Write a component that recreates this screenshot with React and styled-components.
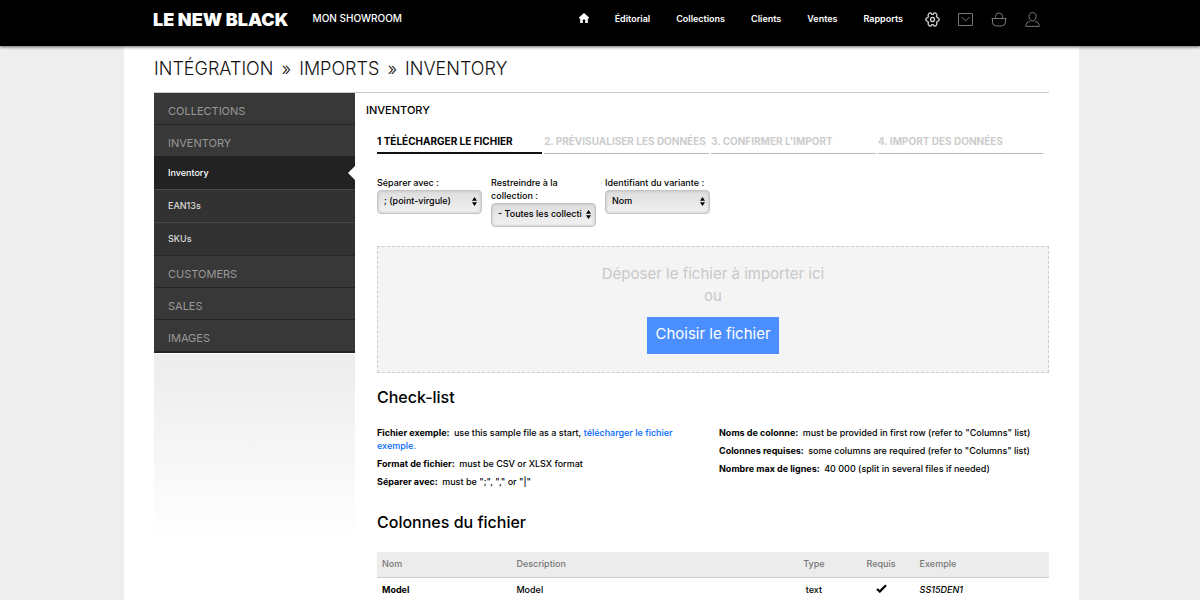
import React from 'react';
import styled, { createGlobalStyle } from 'styled-components';

const GlobalStyle = createGlobalStyle`
  * {
    box-sizing: border-box;
  }
  body {
    margin: 0;
    background-color: #eee;
    color: #000;
    font-family: Inter, 'Liberation Sans', sans-serif;
    font-size: 9px;
    font-weight: 500;
    line-height: 13px;
  }
  a {
    text-decoration: none;
  }
`;

const Header = styled.header`
  position: relative;
  display: flex;
  align-items: flex-start;
  height: 46px;
  padding: 8px 160px 0 153px;
  background-color: #000;
  box-shadow: 0 1px 3px rgba(0, 0, 0, 0.6);
`;

const Logo = styled.a`
  color: #fff;
  font-size: 18px;
  font-weight: 900;
  line-height: 24px;
  white-space: nowrap;
`;

const Showroom = styled.a`
  margin-left: 24px;
  color: #fff;
  font-size: 10px;
  line-height: 20px;
`;

const Nav = styled.nav`
  display: flex;
  align-items: center;
  gap: 26px;
  height: 20px;
  margin-left: auto;
`;

const NavLink = styled.a`
  color: #fff;
  font-weight: 600;
  svg {
    display: block;
  }
`;

const Tools = styled.div`
  display: flex;
  align-items: center;
  gap: 18px;
  height: 22px;
  margin-left: 22px;
`;

const ToolLink = styled.a`
  color: ${({ $active }) => ($active ? '#ccc' : '#777')};
  svg {
    display: block;
    fill: none;
    stroke: currentColor;
  }
`;

const Page = styled.div`
  min-height: calc(100vh - 46px);
  margin: 0 121px 0 124px;
  padding: 0 30px;
  background-color: #fff;
`;

const Title = styled.h1`
  margin: 0;
  padding: 10px 0;
  color: #111;
  font-size: 18px;
  font-weight: 300;
  line-height: 26px;
  text-transform: uppercase;
`;

const Separator = styled.span`
  margin: 0 3px;
`;

const Columns = styled.div`
  display: flex;
  border-top: 1px solid #ccc;
`;

const Sidebar = styled.aside`
  flex: none;
  width: 201px;
`;

const Menu = styled.ul`
  margin: 0;
  padding: 0;
  list-style: none;
  border-bottom: 1px solid #222;
`;

const MenuItem = styled.li`
  background-color: #383838;
  border-bottom: 1px solid #262626;
`;

const MenuLink = styled.a`
  display: block;
  padding: 5px 14px 0;
  color: #999;
  font-size: 11px;
  font-weight: 400;
  line-height: 26px;
  text-transform: uppercase;
`;

const SubMenu = styled.ul`
  margin: 0;
  padding: 0;
  list-style: none;
`;

const SubLink = styled.a`
  position: relative;
  display: block;
  padding: 0 14px;
  border-top: 1px solid ${({ $current }) => ($current ? '#222' : '#484848')};
  background-color: ${({ $current }) => ($current ? '#222' : '#323232')};
  color: ${({ $current }) => ($current ? '#fff' : '#ddd')};
  line-height: 32px;
  &::after {
    content: '';
    display: ${({ $current }) => ($current ? 'block' : 'none')};
    position: absolute;
    top: 9px;
    right: 0;
    border: 7px solid transparent;
    border-right-color: #fff;
    border-left: 0;
  }
`;

const Fade = styled.div`
  height: 186px;
  margin-top: 1px;
  background: linear-gradient(#ececec, #fff);
`;

const Main = styled.main`
  flex: 1;
  min-width: 0;
  padding: 10px 0 0 11px;
`;

const MainTitle = styled.h2`
  margin: 0;
  font-size: 11px;
  font-weight: 500;
  line-height: 15px;
  text-transform: uppercase;
`;

const Content = styled.div`
  padding-left: 11px;
`;

const Steps = styled.ol`
  display: grid;
  grid-template-columns: repeat(4, 1fr);
  gap: 2px;
  margin: 14px 6px 22px 0;
  padding: 0;
  list-style: none;
`;

const Step = styled.li`
  height: 22px;
  border-bottom: ${({ $active }) => ($active ? '2px solid #111' : '1px solid #bbb')};
  color: ${({ $active }) => ($active ? '#000' : '#ccc')};
  font-size: 10px;
  font-weight: 700;
  line-height: 18px;
  text-transform: uppercase;
  white-space: nowrap;
`;

const Filters = styled.div`
  display: flex;
  align-items: flex-start;
  gap: 9px;
`;

const Field = styled.label`
  display: block;
  width: 105px;
`;

const SelectBox = styled.span`
  position: relative;
  display: block;
  margin-top: 1px;
  svg {
    position: absolute;
    top: 7px;
    right: 5px;
    pointer-events: none;
  }
`;

const Select = styled.select`
  display: block;
  width: 100%;
  height: 24px;
  padding: 0 12px 4px 6px;
  appearance: none;
  border: 1px solid #c4c4c4;
  border-radius: 4px;
  background: linear-gradient(#ddd, #f2f2f2);
  box-shadow: inset 0 0 3px #bbb;
  color: #000;
  font: inherit;
`;

const DropZone = styled.div`
  margin: 19px 0 13px;
  padding: 16px 0 18px;
  border: 1px dashed #ccc;
  background-color: #f4f4f4;
  color: #c8c8c8;
  font-size: 15px;
  font-weight: 400;
  line-height: 22px;
  text-align: center;
`;

const FileButton = styled.button`
  display: block;
  height: 37px;
  margin: 10px auto 0;
  padding: 0 8px 4px;
  border: 0;
  background-color: #4b8ffe;
  color: #fff;
  font: inherit;
  cursor: pointer;
`;

const SectionTitle = styled.h3`
  margin: 0;
  font-size: 16px;
  font-weight: 500;
  line-height: 22px;
`;

const CheckList = styled.div`
  display: grid;
  grid-template-columns: 1fr 1fr;
  gap: 12px;
  margin: 18px 0;
`;

const Check = styled.p`
  margin: 0 0 5px;
  b {
    margin-right: 2px;
  }
  a {
    color: #06f;
  }
`;

const Table = styled.table`
  width: 100%;
  margin-top: 19px;
  table-layout: fixed;
  border-collapse: collapse;
`;

const HeadCell = styled.th`
  width: ${({ $width }) => $width || 'auto'};
  height: 25px;
  padding: 0 5px 2px;
  border-bottom: 1px solid #ccc;
  background-color: #ececec;
  color: #777;
  font-weight: 500;
  text-align: ${({ $align }) => $align || 'left'};
`;

const Cell = styled.td`
  height: 24px;
  padding: 0 5px;
  text-align: ${({ $align }) => $align || 'left'};
`;

const HomeIcon = () => (
  <svg width="10" height="11" viewBox="0 0 10 11" fill="#fff">
    <path d="M5 0 L10 4.600 V5.400 H8.800 V10 H6.200 V6.500 H3.800 V10 H1.200 V5.400 H0 V4.600 Z" />
  </svg>
);

const GearIcon = () => (
  <svg width="15" height="15" viewBox="0 0 15 15" strokeWidth="1.3" strokeLinejoin="round">
    <path d="M4.200 1.200 L6 1 L6.800 2.300 H8.200 L9 1 L10.800 1.200 L12 3 L11.500 4.400 L12.300 5.600 L13.700 6 L14.200 7.500 L13.700 9 L12.300 9.400 L11.500 10.600 L12 12 L10.800 13.800 L9 14 L8.200 12.700 H6.800 L6 14 L4.200 13.800 L3 12 L3.500 10.600 L2.700 9.400 L1.300 9 L.8 7.500 L1.300 6 L2.700 5.600 L3.500 4.400 L3 3 Z" />
    <circle cx="7.5" cy="7.5" r="2" />
  </svg>
);

const MailIcon = () => (
  <svg width="15" height="13" viewBox="0 0 15 13">
    <path d="M.5.5h14v12H.5zM3.500 4l4 4 4-4" />
  </svg>
);

const BasketIcon = () => (
  <svg width="16" height="15" viewBox="0 0 16 15">
    <path d="M.5 6.500h15M1.500 6.500v3.500q0 4 4 4h5q4 0 4-4V6.500M4.500 6.500V4.500a3.500 3.500 0 0 1 7 0v2" />
  </svg>
);

const UserIcon = () => (
  <svg width="15" height="15" viewBox="0 0 15 15">
    <path d="M7.500.6c2.300 0 3.600 1.500 3.600 3.700 0 2.400-1.500 4.700-3.600 4.700S3.900 6.700 3.900 4.300C3.900 2.100 5.200.6 7.500.6zM4.800 9.300C2.500 10 .8 11 .8 14.400h13.400c0-3.400-1.700-4.400-4-5.100" />
  </svg>
);

const ArrowsIcon = () => (
  <svg width="5" height="9" viewBox="0 0 5 9">
    <path d="M2.500 0 L5 3.700 H0 Z M2.500 9 L5 5.300 H0 Z" />
  </svg>
);

const CheckIcon = () => (
  <svg width="11" height="9" viewBox="0 0 11 9">
    <path d="M1 5 L3.800 7.500 L10 1.300" fill="none" stroke="#000" strokeWidth="2.300" />
  </svg>
);

const steps = [
  '1 Télécharger le fichier',
  '2. Prévisualiser les données',
  "3. Confirmer l'import",
  '4. Import des données',
];

const filters = [
  { label: 'Séparer avec :', value: '; (point-virgule)' },
  { label: 'Restreindre à la collection :', value: '- Toutes les collecti' },
  { label: 'Identifiant du variante :', value: 'Nom' },
];

const App = () => {
  const [current, setCurrent] = React.useState('Inventory');

  return (
    <>
      <GlobalStyle />
      <Header>
        <Logo href="#">LE NEW BLACK</Logo>
        <Showroom href="#">MON SHOWROOM</Showroom>
        <Nav>
          <NavLink href="#" aria-label="Accueil"><HomeIcon /></NavLink>
          <NavLink href="#">Éditorial</NavLink>
          <NavLink href="#">Collections</NavLink>
          <NavLink href="#">Clients</NavLink>
          <NavLink href="#">Ventes</NavLink>
          <NavLink href="#">Rapports</NavLink>
        </Nav>
        <Tools>
          <ToolLink href="#" $active aria-label="Réglages"><GearIcon /></ToolLink>
          <ToolLink href="#" aria-label="Messages"><MailIcon /></ToolLink>
          <ToolLink href="#" aria-label="Panier"><BasketIcon /></ToolLink>
          <ToolLink href="#" aria-label="Compte"><UserIcon /></ToolLink>
        </Tools>
      </Header>
      <Page>
        <Title>
          Intégration <Separator>»</Separator> Imports <Separator>»</Separator> Inventory
        </Title>
        <Columns>
          <Sidebar>
            <Menu>
              <MenuItem><MenuLink href="#">Collections</MenuLink></MenuItem>
              <MenuItem>
                <MenuLink href="#">Inventory</MenuLink>
                <SubMenu>
                  {['Inventory', 'EAN13s', 'SKUs'].map((name) => (
                    <li key={name}>
                      <SubLink href="#" $current={name === current} onClick={() => setCurrent(name)}>
                        {name}
                      </SubLink>
                    </li>
                  ))}
                </SubMenu>
              </MenuItem>
              <MenuItem><MenuLink href="#">Customers</MenuLink></MenuItem>
              <MenuItem><MenuLink href="#">Sales</MenuLink></MenuItem>
              <MenuItem><MenuLink href="#">Images</MenuLink></MenuItem>
            </Menu>
            <Fade />
          </Sidebar>
          <Main>
            <MainTitle>Inventory</MainTitle>
            <Content>
              <Steps>
                {steps.map((step, i) => (
                  <Step key={step} $active={i === 0}>{step}</Step>
                ))}
              </Steps>
              <Filters>
                {filters.map(({ label, value }) => (
                  <Field key={label}>
                    {label}
                    <SelectBox>
                      <Select>
                        <option>{value}</option>
                      </Select>
                      <ArrowsIcon />
                    </SelectBox>
                  </Field>
                ))}
              </Filters>
              <DropZone>
                <div>Déposer le fichier à importer ici</div>
                <div>ou</div>
                <FileButton type="button">Choisir le fichier</FileButton>
              </DropZone>
              <SectionTitle>Check-list</SectionTitle>
              <CheckList>
                <div>
                  <Check>
                    <b>Fichier exemple:</b> use this sample file as a start,{' '}
                    <a href="#">télécharger le fichier exemple.</a>
                  </Check>
                  <Check><b>Format de fichier:</b> must be CSV or XLSX format</Check>
                  <Check><b>Séparer avec:</b> must be ";", "," or "|"</Check>
                </div>
                <div>
                  <Check><b>Noms de colonne:</b> must be provided in first row (refer to "Columns" list)</Check>
                  <Check><b>Colonnes requises:</b> some columns are required (refer to "Columns" list)</Check>
                  <Check><b>Nombre max de lignes:</b> 40 000 (split in several files if needed)</Check>
                </div>
              </CheckList>
              <SectionTitle>Colonnes du fichier</SectionTitle>
              <Table>
                <thead>
                  <tr>
                    <HeadCell $width="20%">Nom</HeadCell>
                    <HeadCell>Description</HeadCell>
                    <HeadCell $width="10%" $align="center">Type</HeadCell>
                    <HeadCell $width="10%" $align="center">Requis</HeadCell>
                    <HeadCell $width="20%">Exemple</HeadCell>
                  </tr>
                </thead>
                <tbody>
                  <tr>
                    <Cell><b>Model</b></Cell>
                    <Cell>Model</Cell>
                    <Cell $align="center">text</Cell>
                    <Cell $align="center"><CheckIcon /></Cell>
                    <Cell><i>SS15DEN1</i></Cell>
                  </tr>
                </tbody>
              </Table>
            </Content>
          </Main>
        </Columns>
      </Page>
    </>
  );
};

export default App;
